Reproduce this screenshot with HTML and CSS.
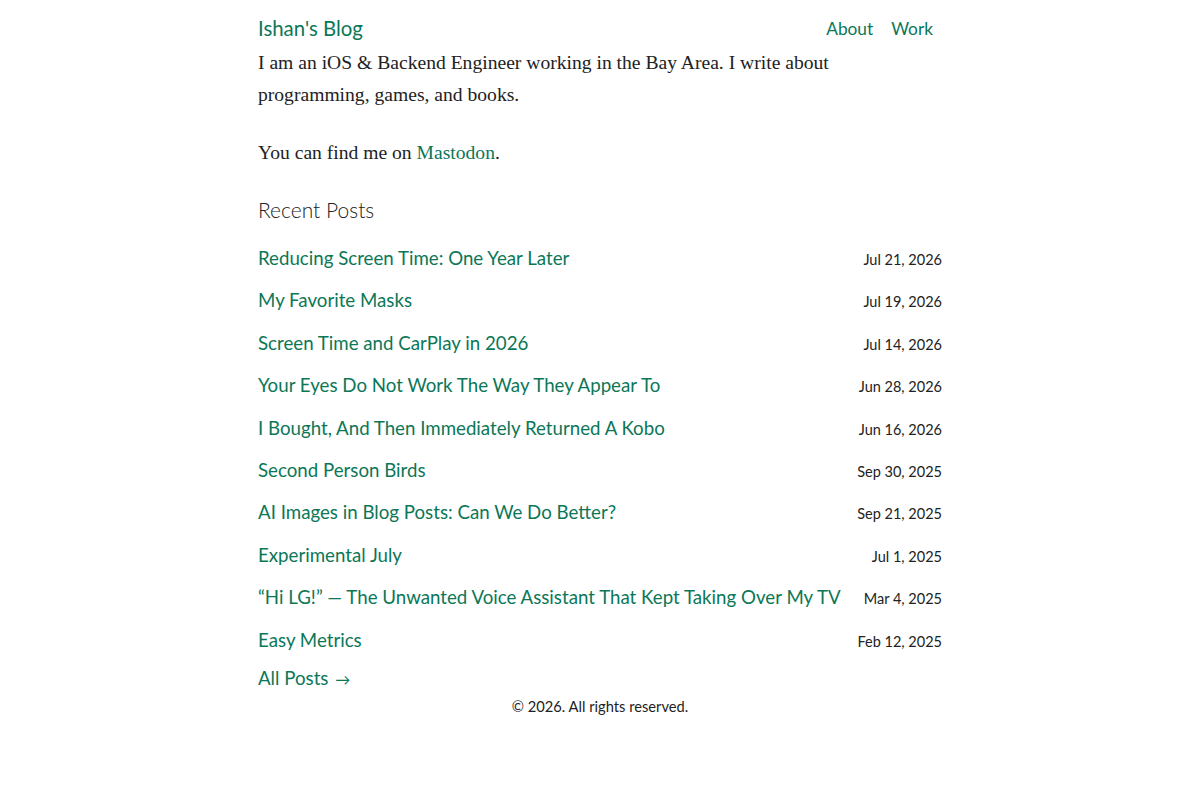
FILE: index.html
```html
<!DOCTYPE html>
<html lang="en">
<head>
  <meta charset="UTF-8" />
  <meta name="viewport" content="width=device-width, initial-scale=1.0"/>
  <title>Ishan's Blog</title>
  <link rel="stylesheet" href="styles.css">
</head>
<body>
  <div class="page">
    <header class="site-header">
      <a class="site-title" href="#">Ishan's Blog</a>
      <nav class="site-nav">
        <a href="#">About</a>
        <a href="#">Work</a>
      </nav>
    </header>

    <main>
      <div class="intro">
        <p>I am an iOS &amp; Backend Engineer working in the Bay Area. I write about programming, games, and books.</p>
        <p>You can find me on <a href="#">Mastodon</a>.</p>
      </div>

      <h2 class="section-title">Recent Posts</h2>
      <ul class="post-list">
        <li><a href="#">Reducing Screen Time: One Year Later</a><time>Jul 21, 2026</time></li>
        <li><a href="#">My Favorite Masks</a><time>Jul 19, 2026</time></li>
        <li><a href="#">Screen Time and CarPlay in 2026</a><time>Jul 14, 2026</time></li>
        <li><a href="#">Your Eyes Do Not Work The Way They Appear To</a><time>Jun 28, 2026</time></li>
        <li><a href="#">I Bought, And Then Immediately Returned A Kobo</a><time>Jun 16, 2026</time></li>
        <li><a href="#">Second Person Birds</a><time>Sep 30, 2025</time></li>
        <li><a href="#">AI Images in Blog Posts: Can We Do Better?</a><time>Sep 21, 2025</time></li>
        <li><a href="#">Experimental July</a><time>Jul 1, 2025</time></li>
        <li><a href="#">“Hi LG!” — The Unwanted Voice Assistant That Kept Taking Over My TV</a><time>Mar 4, 2025</time></li>
        <li><a href="#">Easy Metrics</a><time>Feb 12, 2025</time></li>
      </ul>
      <a class="all-posts" href="#">All Posts <span class="arrow">→</span></a>
    </main>

    <footer class="site-footer">© 2026. All rights reserved.</footer>
  </div>
</body>
</html>
```

FILE: styles.css
```css
:root {
  --fg: #222;
  --link: #0b7757;
  --sans: Lato, "Open Sans", Arial, sans-serif;
  --serif: "Liberation Serif", "Times New Roman", serif;
}
body {
  margin: 0;
  background: #fff;
  color: var(--fg);
  font-family: var(--sans);
}
a { color: var(--link); text-decoration: none; }
.page {
  max-width: 684px;
  margin: 0 auto;
  padding-top: 16px;
}

.site-header {
  display: flex;
  justify-content: space-between;
  align-items: center;
}
.site-title { font-size: 20.4px; }
.site-nav { display: flex; gap: 18px; padding-right: 9px; font-size: 17.3px; }

.intro p {
  font-family: var(--serif);
  font-size: 19.6px;
  line-height: 32px;
  margin: 0 0 26px;
}
.intro p:first-child { margin-top: 7px; }

.section-title {
  font-size: 21px;
  font-weight: 300;
  margin: 0 0 25px;
  padding-top: 2px;
}

.post-list { list-style: none; margin: 0; padding: 0; }
.post-list li {
  display: flex;
  justify-content: space-between;
  align-items: baseline;
  gap: 12px;
  height: 42.4px;
  font-size: 18.7px;
  white-space: nowrap;
}
.post-list li:last-child { height: 38px; }
.post-list time { font-size: 14.5px; color: var(--fg); }

.all-posts { display: inline-block; font-size: 18.7px; }
.arrow { font-size: 15px; margin-left: 2px; }

.site-footer {
  text-align: center;
  font-size: 14.7px;
  margin-top: 8px;
}
```
